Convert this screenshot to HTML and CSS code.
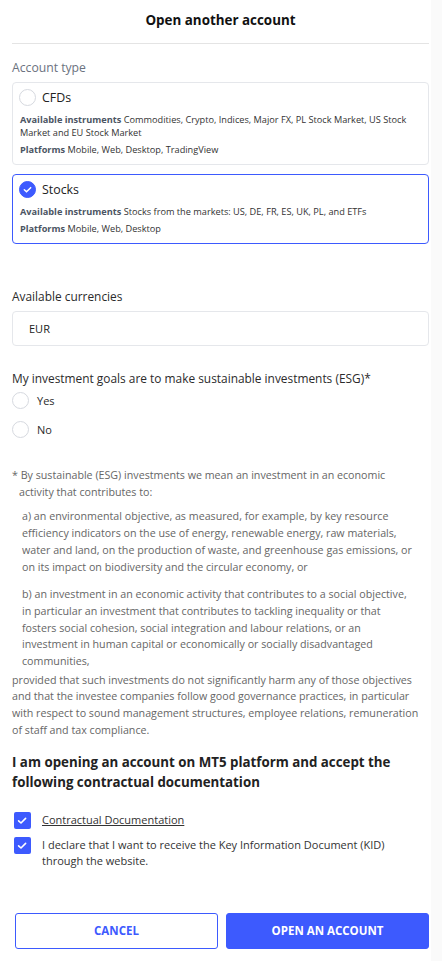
FILE: index.html
```html
<!DOCTYPE html>
<html lang="en">
<head>
<meta charset="utf-8">
<title>Open another account</title>
<link rel="stylesheet" href="styles.css">
</head>
<body>
<div class="modal">
  <header class="header"><h1 class="title">Open another account</h1></header>

  <section class="section">
    <div class="label">Account type</div>
    <div class="card">
      <div class="card-head"><span class="radio"></span><span class="card-name">CFDs</span></div>
      <p class="meta"><b>Available instruments</b> Commodities, Crypto, Indices, Major FX, PL Stock Market, US Stock Market and EU Stock Market</p>
      <p class="meta"><b>Platforms</b> Mobile, Web, Desktop, TradingView</p>
    </div>
    <div class="card card-active">
      <div class="card-head"><span class="radio radio-on"><svg viewBox="0 0 18 18" width="18" height="18"><path d="M5.2 9.3l2.6 2.5 5-5" fill="none" stroke="#fff" stroke-width="1.8" stroke-linecap="round" stroke-linejoin="round"/></svg></span><span class="card-name">Stocks</span></div>
      <p class="meta"><b>Available instruments</b> Stocks from the markets: US, DE, FR, ES, UK, PL, and ETFs</p>
      <p class="meta"><b>Platforms</b> Mobile, Web, Desktop</p>
    </div>
  </section>

  <section class="section-cur">
    <div class="label-dark">Available currencies</div>
    <div class="input">EUR</div>
  </section>

  <section class="section-esg">
    <div class="label-dark label-esg">My investment goals are to make sustainable investments (ESG)*</div>
    <label class="opt"><span class="radio"></span><span>Yes</span></label>
    <label class="opt"><span class="radio"></span><span>No</span></label>
  </section>

  <section class="note">
    <p class="note-lead">* By sustainable (ESG) investments we mean an investment in an economic<br>activity that contributes to:</p>
    <p class="note-item note-a">a) an environmental objective, as measured, for example, by key resource<br>efficiency indicators on the use of energy, renewable energy, raw materials,<br>water and land, on the production of waste, and greenhouse gas emissions, or<br>on its impact on biodiversity and the circular economy, or</p>
    <p class="note-item note-b">b) an investment in an economic activity that contributes to a social objective,<br>in particular an investment that contributes to tackling inequality or that<br>fosters social cohesion, social integration and labour relations, or an<br>investment in human capital or economically or socially disadvantaged<br>communities,</p>
    <p class="note-end">provided that such investments do not significantly harm any of those objectives<br>and that the investee companies follow good governance practices, in particular<br>with respect to sound management structures, employee relations, remuneration<br>of staff and tax compliance.</p>
  </section>

  <section class="docs">
    <h2 class="docs-title">I am opening an account on MT5 platform and accept the following contractual documentation</h2>
    <label class="check-row"><span class="check"><svg viewBox="0 0 17 17" width="17" height="17"><path d="M4.6 8.8l2.4 2.2 4.6-4.6" fill="none" stroke="#fff" stroke-width="1.6" stroke-linecap="round" stroke-linejoin="round"/></svg></span><span class="link">Contractual Documentation</span></label>
    <label class="check-row"><span class="check"><svg viewBox="0 0 17 17" width="17" height="17"><path d="M4.6 8.8l2.4 2.2 4.6-4.6" fill="none" stroke="#fff" stroke-width="1.6" stroke-linecap="round" stroke-linejoin="round"/></svg></span><span>I declare that I want to receive the Key Information Document (KID) through the website.</span></label>
  </section>

  <footer class="actions">
    <button class="btn btn-outline">CANCEL</button>
    <button class="btn btn-primary">OPEN AN ACCOUNT</button>
  </footer>
</div>
</body>
</html>
```

FILE: styles.css
```css
* { box-sizing: border-box; }
html, body { margin: 0; padding: 0; }
body {
  background: #fafafa;
  font-family: "Open Sans", "Noto Sans", sans-serif;
  color: #2b2b2b;
}
.modal {
  width: 431px;
  min-height: 961px;
  background: #fff;
  padding: 0 2px 0 12px;
}
.header {
  height: 44px;
  border-bottom: 1px solid #e4e4e4;
  display: flex;
  align-items: center;
  justify-content: center;
}
.title {
  margin: 0;
  font-size: 13.4px;
  font-weight: 700;
  color: #111;
  padding-bottom: 4px;
}
.section { padding-top: 15px; }
.label {
  font-size: 12.2px;
  color: #6b7280;
  line-height: 18px;
  margin-bottom: 5px;
}
.card {
  border: 1px solid #e5e7eb;
  border-radius: 4px;
  padding: 5px 8px 6px 6px;
  margin-bottom: 9px;
}
.card-active { border-color: #3d5afe; }
.card-head {
  display: flex;
  align-items: center;
  gap: 6px;
  height: 18px;
  margin-bottom: 7px;
}
.card-name { font-size: 12.4px; color: #222; }
.radio {
  width: 17px;
  height: 17px;
  border-radius: 50%;
  border: 1px solid #d6d9df;
  background: #fff;
  display: inline-flex;
  align-items: center;
  justify-content: center;
  flex: none;
}
.radio-on { background: #3d5afe; border-color: #3d5afe; }
.radio-on svg { width: 17px; height: 17px; }
.meta {
  margin: 0 0 4px;
  font-size: 9.2px;
  line-height: 13px;
  color: #333;
  padding-left: 1px;
}
.meta:last-child { margin-bottom: 2px; }
.meta b { color: #4b5563; font-weight: 700; }
.section-cur { padding-top: 34px; }
.label-dark {
  font-size: 11.9px;
  color: #2b2b2b;
  line-height: 18px;
}
.label-esg { margin-bottom: -1px; }
.input {
  margin-top: 6px;
  height: 35px;
  border: 1px solid #e5e7eb;
  border-radius: 4px;
  font-size: 11px;
  color: #222;
  display: flex;
  align-items: center;
  padding-left: 16px;
}
.section-esg { padding-top: 23px; }
.opt {
  display: flex;
  align-items: center;
  gap: 8px;
  font-size: 11px;
  height: 29px;
}
.note {
  padding-top: 23px;
  color: #666;
  font-size: 10.7px;
  line-height: 16.7px;
  margin-right: -12px;
}
.note p { margin: 0; }
.note-lead { padding-left: 7px; text-indent: -7px; margin-bottom: 8px !important; }
.note-item { padding-left: 10px; }
.note-a { margin-bottom: 11px !important; }
.note-b { margin-bottom: 2px !important; }
.docs { padding-top: 13px; }
.docs-title {
  margin: 0 0 20px;
  font-size: 13.3px;
  line-height: 20px;
  font-weight: 700;
  color: #222;
}
.check-row {
  display: flex;
  align-items: flex-start;
  gap: 11px;
  font-size: 11px;
  line-height: 16px;
  color: #333;
  margin-bottom: 8px;
  padding-left: 2px;
  padding-right: 10px;
}
.check {
  width: 17px;
  height: 17px;
  border-radius: 2px;
  background: #3d5afe;
  flex: none;
  display: inline-flex;
}
.link { text-decoration: underline; }
.actions {
  display: flex;
  gap: 8px;
  padding: 36px 0 0 3px;
}
.btn {
  flex: 1;
  height: 36px;
  border-radius: 3px;
  font-family: inherit;
  font-size: 11.5px;
  font-weight: 700;
  cursor: pointer;
}
.btn-outline {
  background: #fff;
  border: 1px solid #3d5afe;
  color: #3d5afe;
}
.btn-primary {
  background: #3d5afe;
  border: 1px solid #3d5afe;
  color: #fff;
}
```
